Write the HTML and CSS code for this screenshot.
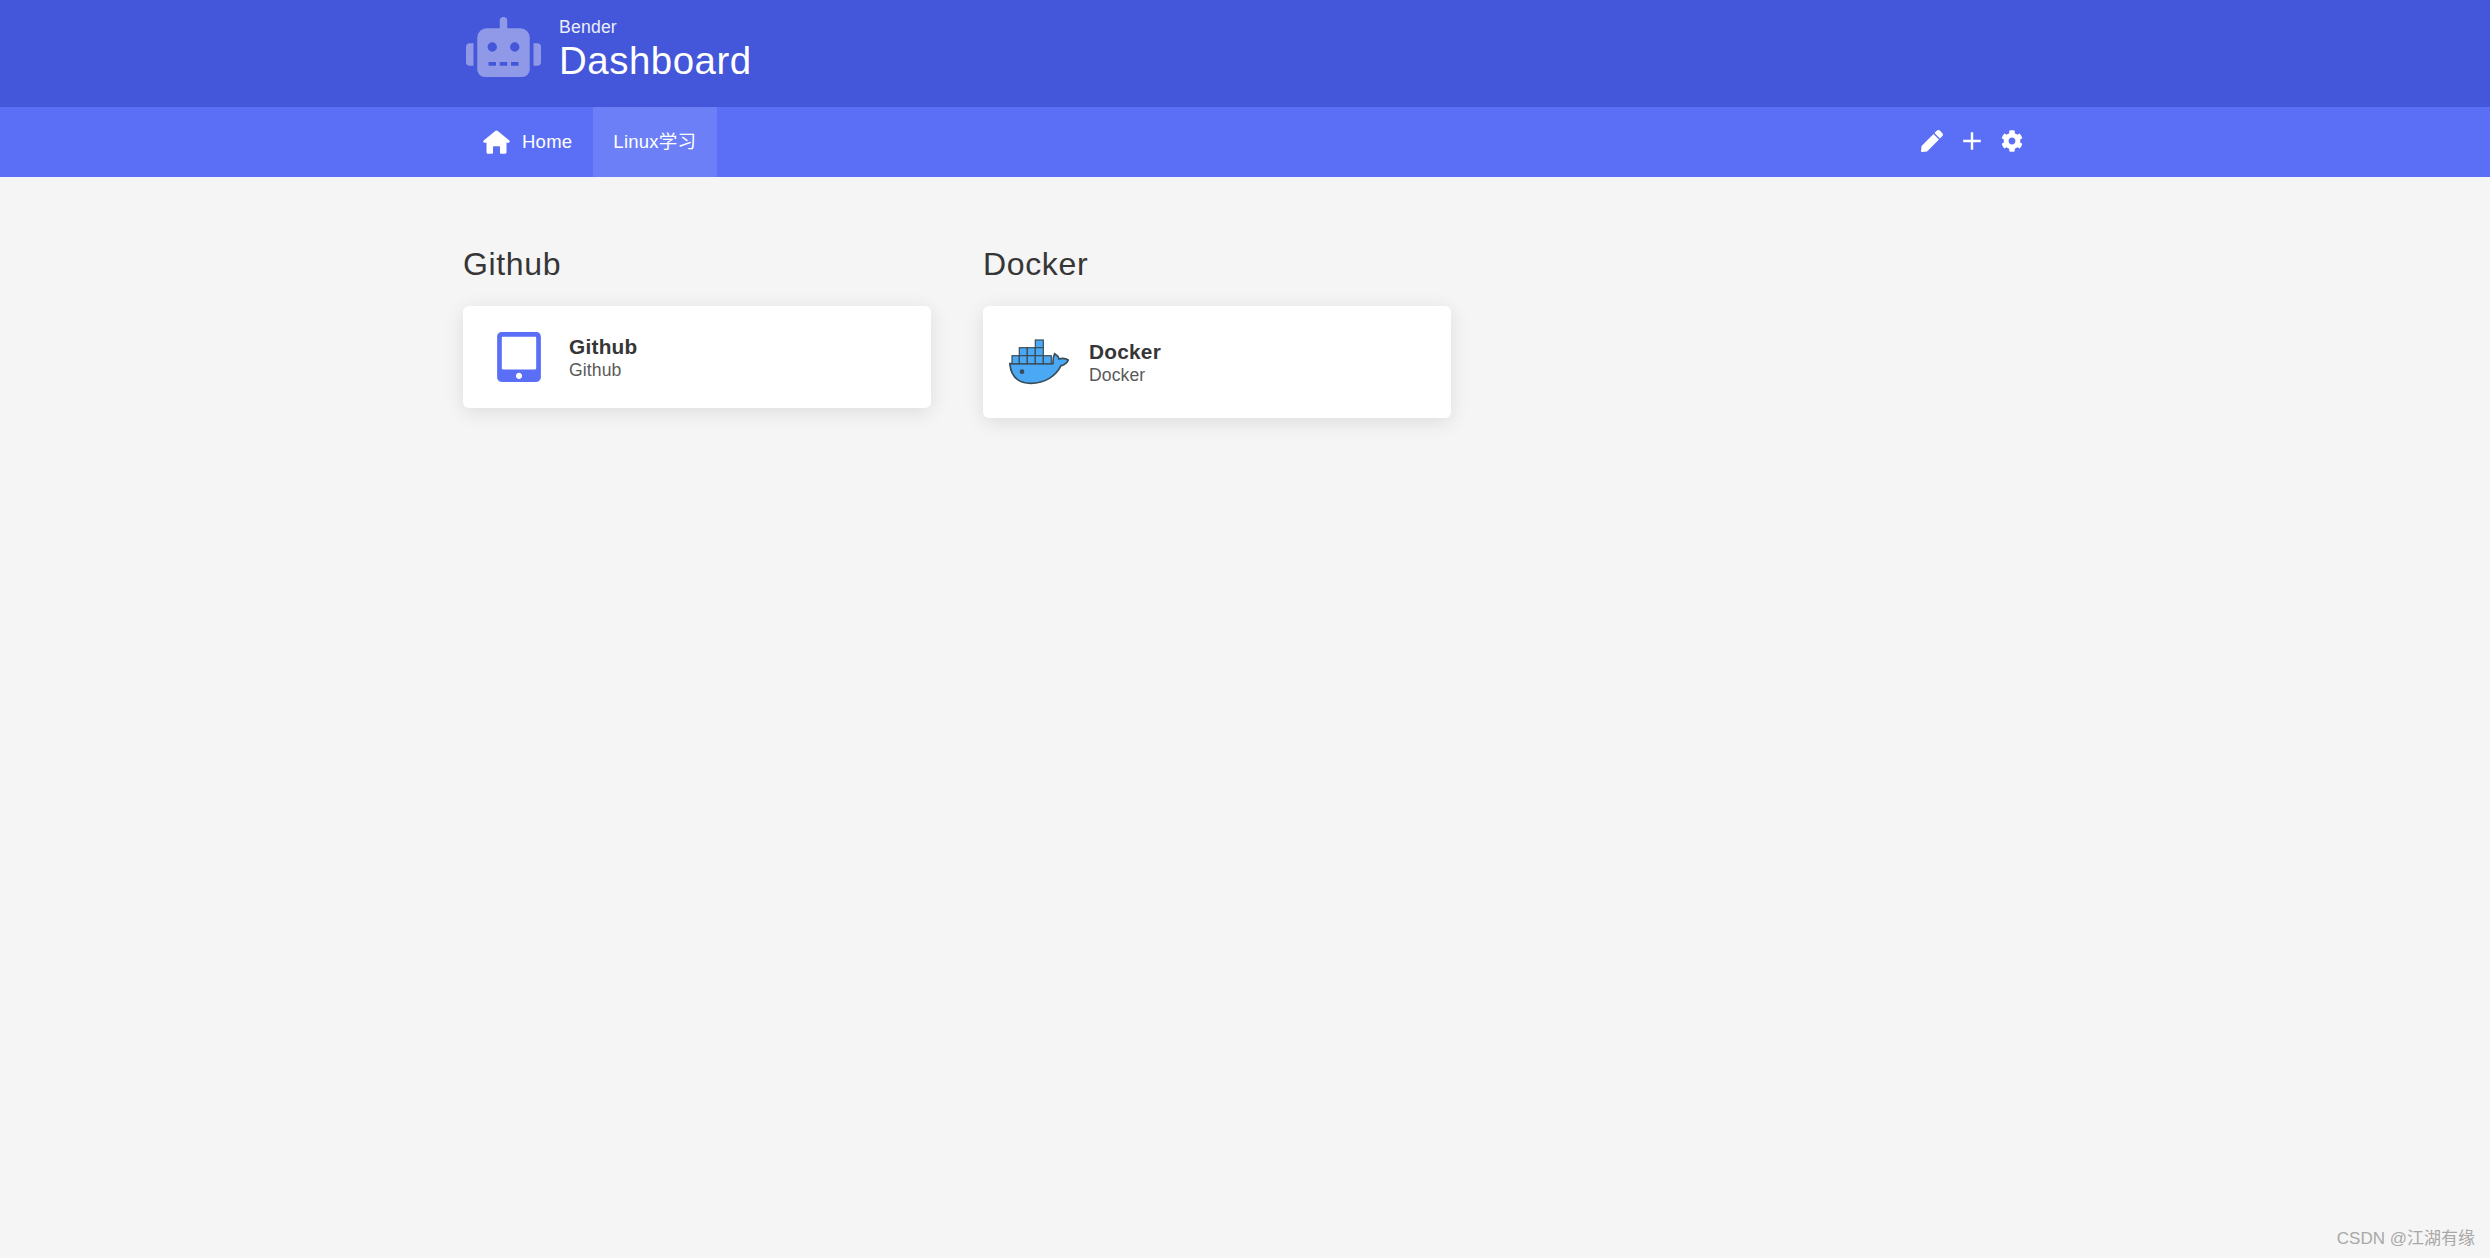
FILE: index.html
```html
<!DOCTYPE html>
<html lang="en">
<head>
<meta charset="utf-8">
<title>Dashboard</title>
<link rel="stylesheet" href="styles.css">
</head>
<body>
<header class="masthead">
  <div class="wrap masthead-inner">
    <svg class="logo" viewBox="0 0 640 512"><path d="M32,224H64V416H32A31.96166,31.96166,0,0,1,0,384V256A31.96166,31.96166,0,0,1,32,224Zm512-48V448a64.06328,64.06328,0,0,1-64,64H160a64.06328,64.06328,0,0,1-64-64V176a79.974,79.974,0,0,1,80-80H288V32a32,32,0,0,1,64,0V96H464A79.974,79.974,0,0,1,544,176ZM264,256a40,40,0,1,0-40,40A39.997,39.997,0,0,0,264,256Zm-8,128H192v32h64Zm96,0H288v32h64ZM456,256a40,40,0,1,0-40,40A39.997,39.997,0,0,0,456,256Zm-8,128H384v32h64ZM640,256V384a31.96166,31.96166,0,0,1-32,32H576V224h32A31.96166,31.96166,0,0,1,640,256Z"/></svg>
    <div class="brand">
      <span class="brand-sub">Bender</span>
      <span class="brand-title">Dashboard</span>
    </div>
  </div>
</header>
<nav class="navbar">
  <div class="wrap navbar-inner">
    <div class="tabs">
      <a class="tab">
        <svg class="home-icon" viewBox="0 0 27 24"><path d="M13.5 0.5 C14 0.5 14.4 0.7 14.8 1 L26.3 10.6 C27.2 11.4 26.7 12.8 25.5 12.8 H23.5 V22.3 C23.5 23.2 22.8 23.8 22 23.8 H18 C17.4 23.8 17 23.4 17 22.8 V17.2 C17 16.6 16.6 16.2 16 16.2 H11 C10.4 16.2 10 16.6 10 17.2 V22.8 C10 23.4 9.6 23.8 9 23.8 H5 C4.2 23.8 3.5 23.2 3.5 22.3 V12.8 H1.5 C0.3 12.8 -0.2 11.4 0.7 10.6 L12.2 1 C12.6 0.7 13 0.5 13.5 0.5Z"/></svg>
        <span class="tab-label">Home</span>
      </a>
      <a class="tab tab-active"><span class="tab-label">Linux学习</span></a>
    </div>
    <div class="actions">
      <svg class="action-icon" viewBox="0 0 512 512"><path d="M290.74 93.24l128.02 128.02-277.99 277.99-114.14 12.6C11.35 513.54-1.56 500.62.14 485.34l12.7-114.22 277.9-278zm207.2-19.06l-60.11-60.11c-18.75-18.75-49.16-18.75-67.91 0l-56.55 56.55 128.02 128.02 56.55-56.55c18.75-18.76 18.75-49.16 0-67.91z"/></svg>
      <svg class="action-icon" viewBox="0 0 22 22"><path d="M9.8 2.2 H12.2 V9.8 H19.8 V12.2 H12.2 V19.8 H9.8 V12.2 H2.2 V9.8 H9.8Z"/></svg>
      <svg class="action-icon" viewBox="0 0 512 512"><path d="M487.4 315.7l-42.6-24.6c4.3-23.2 4.3-47 0-70.2l42.6-24.6c4.9-2.8 7.1-8.6 5.5-14-11.1-35.6-30-67.8-54.7-94.6-3.8-4.1-10-5.1-14.8-2.3L380.8 110c-17.9-15.4-38.5-27.3-60.8-35.1V25.8c0-5.6-3.9-10.5-9.4-11.7-36.7-8.2-74.3-7.8-109.2 0-5.5 1.2-9.4 6.1-9.4 11.7V75c-22.2 7.9-42.8 19.8-60.8 35.1L88.7 85.5c-4.9-2.8-11-1.9-14.8 2.3-24.7 26.7-43.6 58.9-54.7 94.6-1.7 5.4.6 11.2 5.5 14L67.3 221c-4.3 23.2-4.3 47 0 70.2l-42.6 24.6c-4.9 2.8-7.1 8.6-5.5 14 11.1 35.6 30 67.8 54.7 94.6 3.8 4.1 10 5.1 14.8 2.3l42.6-24.6c17.9 15.4 38.5 27.3 60.8 35.1v49.2c0 5.6 3.9 10.5 9.4 11.7 36.7 8.2 74.3 7.8 109.2 0 5.5-1.2 9.4-6.1 9.4-11.7v-49.2c22.2-7.9 42.8-19.8 60.8-35.1l42.6 24.6c4.9 2.8 11 1.9 14.8-2.3 24.7-26.7 43.6-58.9 54.7-94.6 1.5-5.5-.7-11.3-5.6-14.1zM256 336c-44.1 0-80-35.9-80-80s35.9-80 80-80 80 35.9 80 80-35.9 80-80 80z"/></svg>
    </div>
  </div>
</nav>
<main class="wrap sections">
  <section class="section">
    <h2 class="section-title">Github</h2>
    <div class="card">
      <div class="card-icon">
        <svg class="tablet" viewBox="0 0 448 512"><path d="M400 0H48C21.5 0 0 21.5 0 48v416c0 26.5 21.5 48 48 48h352c26.5 0 48-21.5 48-48V48c0-26.5-21.5-48-48-48zM224 480c-17.7 0-32-14.3-32-32s14.3-32 32-32 32 14.3 32 32-14.3 32-32 32zm176-108c0 6.6-5.4 12-12 12H60c-6.6 0-12-5.4-12-12V60c0-6.6 5.4-12 12-12h328c6.6 0 12 5.4 12 12v312z"/></svg>
      </div>
      <div class="card-text">
        <span class="card-title">Github</span>
        <span class="card-sub">Github</span>
      </div>
    </div>
  </section>
  <section class="section">
    <h2 class="section-title">Docker</h2>
    <div class="card">
      <div class="card-icon">
        <svg class="docker" viewBox="19 7 60 60">
          <path class="whale" d="M19.8 38.7 H63 C62.8 34.5 63.5 31 64.7 28.7 C67 30 68.5 32 69 34 C72 33 76 33.5 78.3 35 C77 38 74 40 71 40.7 C66 51 55 58.3 41 58.3 C28 58.3 21 52 19.8 38.7Z"/>
          <g class="boxes">
            <rect x="45.3" y="15" width="8" height="7.7"/>
            <rect x="29.3" y="22.7" width="8" height="8"/>
            <rect x="37.3" y="22.7" width="8" height="8"/>
            <rect x="45.3" y="22.7" width="8" height="8"/>
            <rect x="22" y="30.7" width="7.4" height="8"/>
            <rect x="29.3" y="30.7" width="8" height="8"/>
            <rect x="37.3" y="30.7" width="8" height="8"/>
            <rect x="45.3" y="30.7" width="8" height="8"/>
            <rect x="53.3" y="30.7" width="8" height="8"/>
          </g>
          <circle class="eye" cx="32" cy="46.7" r="2.4"/>
        </svg>
      </div>
      <div class="card-text">
        <span class="card-title">Docker</span>
        <span class="card-sub">Docker</span>
      </div>
    </div>
  </section>
</main>
<div class="watermark">CSDN @江湖有缘</div>
</body>
</html>
```
FILE: styles.css
```css
* { box-sizing: border-box; }
html, body { margin: 0; height: 100%; }
body {
  background: #f5f5f5;
  font-family: "Liberation Sans", "Noto Sans CJK SC", sans-serif;
  color: #363636;
  position: relative;
  overflow: hidden;
}
.wrap { width: 1564px; margin: 0 auto; }
.masthead { background: #4456d9; height: 107px; }
.masthead-inner { display: flex; align-items: flex-start; height: 100%; padding: 17px 0 0 3px; }
.logo { width: 75px; height: 60px; fill: #fff; opacity: .4; flex: none; }
.brand { display: flex; flex-direction: column; margin-left: 18px; color: #fff; }
.brand-sub { font-size: 17.6px; line-height: 20px; letter-spacing: .2px; opacity: .9; }
.brand-title { font-size: 38.4px; line-height: 44px; margin-top: 2px; letter-spacing: .55px; }
.navbar { background: #5b6ff6; height: 70px; }
.navbar-inner { display: flex; justify-content: space-between; align-items: stretch; height: 100%; }
.tabs { display: flex; }
.tab { display: flex; align-items: center; padding: 0 20px; color: #fff; font-size: 18.5px; }
.tab-label { line-height: 22px; letter-spacing: .25px; }
.tab-active { background: #6c7ff7; margin-left: 1px; padding-right: 21px; }
.home-icon { width: 27px; height: 24px; fill: #fff; margin-right: 12px; }
.actions { display: flex; align-items: center; gap: 18px; padding-right: 4px; padding-bottom: 3px; }
.action-icon { width: 22px; height: 22px; fill: #fff; }
.sections { display: grid; grid-template-columns: repeat(3, 520px); align-items: start; padding-top: 65px; }
.section-title { font-size: 32px; font-weight: 400; line-height: 44px; margin: 0 0 20px; color: #363636; letter-spacing: .65px; }
.card {
  width: 468px;
  display: flex;
  align-items: center;
  padding: 26px 16px;
  background: #fff;
  border-radius: 6px;
  box-shadow: 0 4px 20px rgba(0, 0, 0, .1);
}
.card-icon { width: 80px; display: flex; justify-content: center; margin-right: 10px; flex: none; }
.tablet { width: 44px; height: 50px; fill: #5b6ff6; display: block; }
.docker { width: 60px; height: 60px; display: block; }
.whale { fill: #4aa8f5; stroke: #3b4d57; stroke-width: 1.7; }
.boxes rect { fill: #4aa8f5; stroke: #3b4d57; stroke-width: 1.2; }
.eye { fill: #3b4d57; }
.card-text { display: flex; flex-direction: column; padding-top: 2px; }
.card-title { font-size: 20.8px; font-weight: 700; line-height: 24px; color: #363636; letter-spacing: .25px; }
.card-sub { font-size: 17.6px; line-height: 22px; color: #5a5a5a; letter-spacing: .1px; }
.watermark { position: absolute; right: 15px; bottom: 8px; font-size: 17px; line-height: 22px; color: #a8a8a8; }
```
